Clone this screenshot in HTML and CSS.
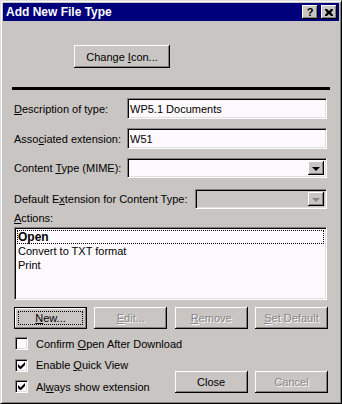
FILE: index.html
```html
<!DOCTYPE html>
<html lang="en">
<head>
  <meta charset="UTF-8" />
  <title>Add New File Type</title>
  <link rel="stylesheet" href="styles.css">
</head>
<body>
  <div class="window">
    <div class="titlebar">
      <span class="title">Add New File Type</span>
      <div class="title-btns">
        <span class="tbtn tbtn-help">?</span>
        <span class="tbtn">
          <svg width="8" height="7" viewBox="0 0 8 7"><path d="M0 0h2l2 2 2-2h2v1L6 3.5 8 6v1H6L4 5 2 7H0V6l2-2.5L0 1z" fill="#000"/></svg>
        </span>
      </div>
    </div>

    <div class="content">
      <div class="icon-row">
        <div class="btn btn-icon"><span>Change <u>I</u>con...</span></div>
      </div>
      <div class="rule"></div>

      <div class="field">
        <span class="label"><u>D</u>escription of type:</span>
        <div class="edit">WP5.1 Documents</div>
      </div>
      <div class="field field-2">
        <span class="label">Asso<u>c</u>iated extension:</span>
        <div class="edit">W51</div>
      </div>
      <div class="field field-3">
        <span class="label">Content <u>T</u>ype (MIME):</span>
        <div class="combo">
          <div class="combo-text"></div>
          <div class="combo-btn"><span class="arrow"></span></div>
        </div>
      </div>
      <div class="field field-4">
        <span class="label label-wide">Default E<u>x</u>tension for Content Type:</span>
        <div class="combo combo-off">
          <div class="combo-text"></div>
          <div class="combo-btn"><span class="arrow"></span></div>
        </div>
      </div>

      <div class="actions-label"><u>A</u>ctions:</div>
      <div class="listbox">
        <div class="item item-focus"><b>Open</b></div>
        <div class="item">Convert to TXT format</div>
        <div class="item">Print</div>
      </div>

      <div class="grid">
        <div class="btn btn-default"><span class="focus"><span><u>N</u>ew...</span></span></div>
        <div class="btn off"><span><u>E</u>dit...</span></div>
        <div class="btn off"><span><u>R</u>emove</span></div>
        <div class="btn off"><span><u>S</u>et Default</span></div>

        <div class="checks">
          <div class="check"><span class="box"></span><span>Confirm <u>O</u>pen After Download</span></div>
          <div class="check"><span class="box"><svg width="7" height="7" viewBox="0 0 7 7"><path d="M0 2v3l2 2h1l4-4V0L2.5 4.5z" fill="#000"/></svg></span><span>Enable <u>Q</u>uick View</span></div>
          <div class="check"><span class="box"><svg width="7" height="7" viewBox="0 0 7 7"><path d="M0 2v3l2 2h1l4-4V0L2.5 4.5z" fill="#000"/></svg></span><span>Al<u>w</u>ays show extension</span></div>
        </div>
        <div class="btn btn-close">Close</div>
        <div class="btn off btn-cancel">Cancel</div>
      </div>
    </div>
  </div>
</body>
</html>
```

FILE: styles.css
```css
body {
  margin: 0;
  font-family: "Liberation Sans", Arial, sans-serif;
  font-size: 11px;
  color: #000;
}
.window {
  width: 342px;
  height: 404px;
  box-sizing: border-box;
  padding: 2px;
  background: #c9c5c2;
  border: 1px solid;
  border-color: #dfdfdf #000 #000 #dfdfdf;
  box-shadow: inset 1px 1px #fff, inset -1px -1px #808080;
}
.titlebar {
  height: 18px;
  background: #00007b;
  display: flex;
  align-items: center;
  justify-content: space-between;
  padding: 0 2px 0 3px;
}
.title {
  color: #fff;
  font-weight: bold;
  font-size: 12px;
}
.title-btns {
  display: flex;
  gap: 3px;
}
.tbtn {
  width: 16px;
  height: 14px;
  box-sizing: border-box;
  background: #c9c5c2;
  display: flex;
  align-items: center;
  justify-content: center;
  box-shadow: inset -1px -1px #000, inset 1px 1px #fff, inset -2px -2px #808080;
}
.tbtn-help {
  font-weight: bold;
  font-size: 11px;
  line-height: 14px;
}
.content {
  padding: 0 11px;
}
.icon-row {
  padding-top: 24px;
  padding-left: 60px;
}
.btn {
  height: 22px;
  box-sizing: border-box;
  display: flex;
  align-items: center;
  justify-content: center;
  background: #c9c5c2;
  white-space: nowrap;
  box-shadow: inset -1px -1px #000, inset 1px 1px #fff, inset -2px -2px #808080;
}
.btn-icon {
  width: 96px;
  height: 23px;
}
.off {
  color: #868686;
  text-shadow: 1px 1px #fff;
}
.btn-default {
  border: 1px solid #000;
  padding: 3px;
  box-shadow: inset -1px -1px #808080, inset 1px 1px #fff;
}
.focus {
  flex: 1;
  align-self: stretch;
  border: 1px dotted #000;
  display: flex;
  align-items: center;
  justify-content: center;
}
.rule {
  margin: 19px -2px 0;
  height: 3px;
  background: #000;
}
.field {
  display: flex;
  align-items: center;
  margin-top: 8px;
  margin-right: 1px;
}
.field-2 { margin-top: 9px; }
.field-3 { margin-top: 9px; }
.field-4 { margin-top: 11px; }
.label {
  width: 113px;
  flex-shrink: 0;
}
.label-wide {
  width: 181px;
}
.edit,
.combo,
.listbox {
  box-sizing: border-box;
  background: #fdf9fd;
  border: 1px solid;
  border-color: #808080 #fff #fff #808080;
  box-shadow: inset 1px 1px #000, inset -1px -1px #dfdfdf;
}
.edit {
  flex: 1;
  height: 21px;
  padding: 2px 2px 0 2px;
  line-height: 16px;
}
.combo {
  flex: 1;
  height: 20px;
  display: flex;
  padding: 2px;
}
.combo-off {
  background: #c9c5c2;
}
.combo-text {
  flex: 1;
}
.combo-btn {
  width: 16px;
  display: flex;
  align-items: center;
  justify-content: center;
  background: #c9c5c2;
  box-shadow: inset -1px -1px #000, inset 1px 1px #fff, inset -2px -2px #808080;
}
.arrow {
  width: 0;
  height: 0;
  border-left: 4px solid transparent;
  border-right: 4px solid transparent;
  border-top: 4px solid #000;
  margin-top: 1px;
}
.combo-off .arrow {
  border-top-color: #868686;
}
.actions-label {
  margin-top: 2px;
  line-height: 14px;
}
.listbox {
  margin-top: 2px;
  margin-right: 1px;
  height: 73px;
  padding: 2px 2px;
}
.item {
  height: 14px;
  line-height: 14px;
  padding-left: 1px;
}
.item-focus {
  outline: 1px dotted #000;
  outline-offset: -1px;
  font-size: 12px;
}
.grid {
  display: grid;
  grid-template-columns: repeat(4, 73px);
  justify-content: space-between;
  margin-top: 7px;
  row-gap: 8px;
}
.checks {
  grid-column: 1 / 3;
  grid-row: 2;
  display: flex;
  flex-direction: column;
  gap: 8.5px;
  white-space: nowrap;
}
.check {
  display: flex;
  align-items: center;
  height: 13px;
  padding-left: 1px;
}
.box {
  width: 13px;
  height: 13px;
  flex-shrink: 0;
  box-sizing: border-box;
  margin-right: 8px;
  background: #fdf9fd;
  border: 1px solid;
  border-color: #808080 #fff #fff #808080;
  box-shadow: inset 1px 1px #000, inset -1px -1px #dfdfdf;
  display: flex;
  align-items: center;
  justify-content: center;
}
.btn-close {
  grid-column: 3;
  grid-row: 2;
  align-self: end;
}
.btn-cancel {
  grid-column: 4;
  grid-row: 2;
  align-self: end;
}
```
